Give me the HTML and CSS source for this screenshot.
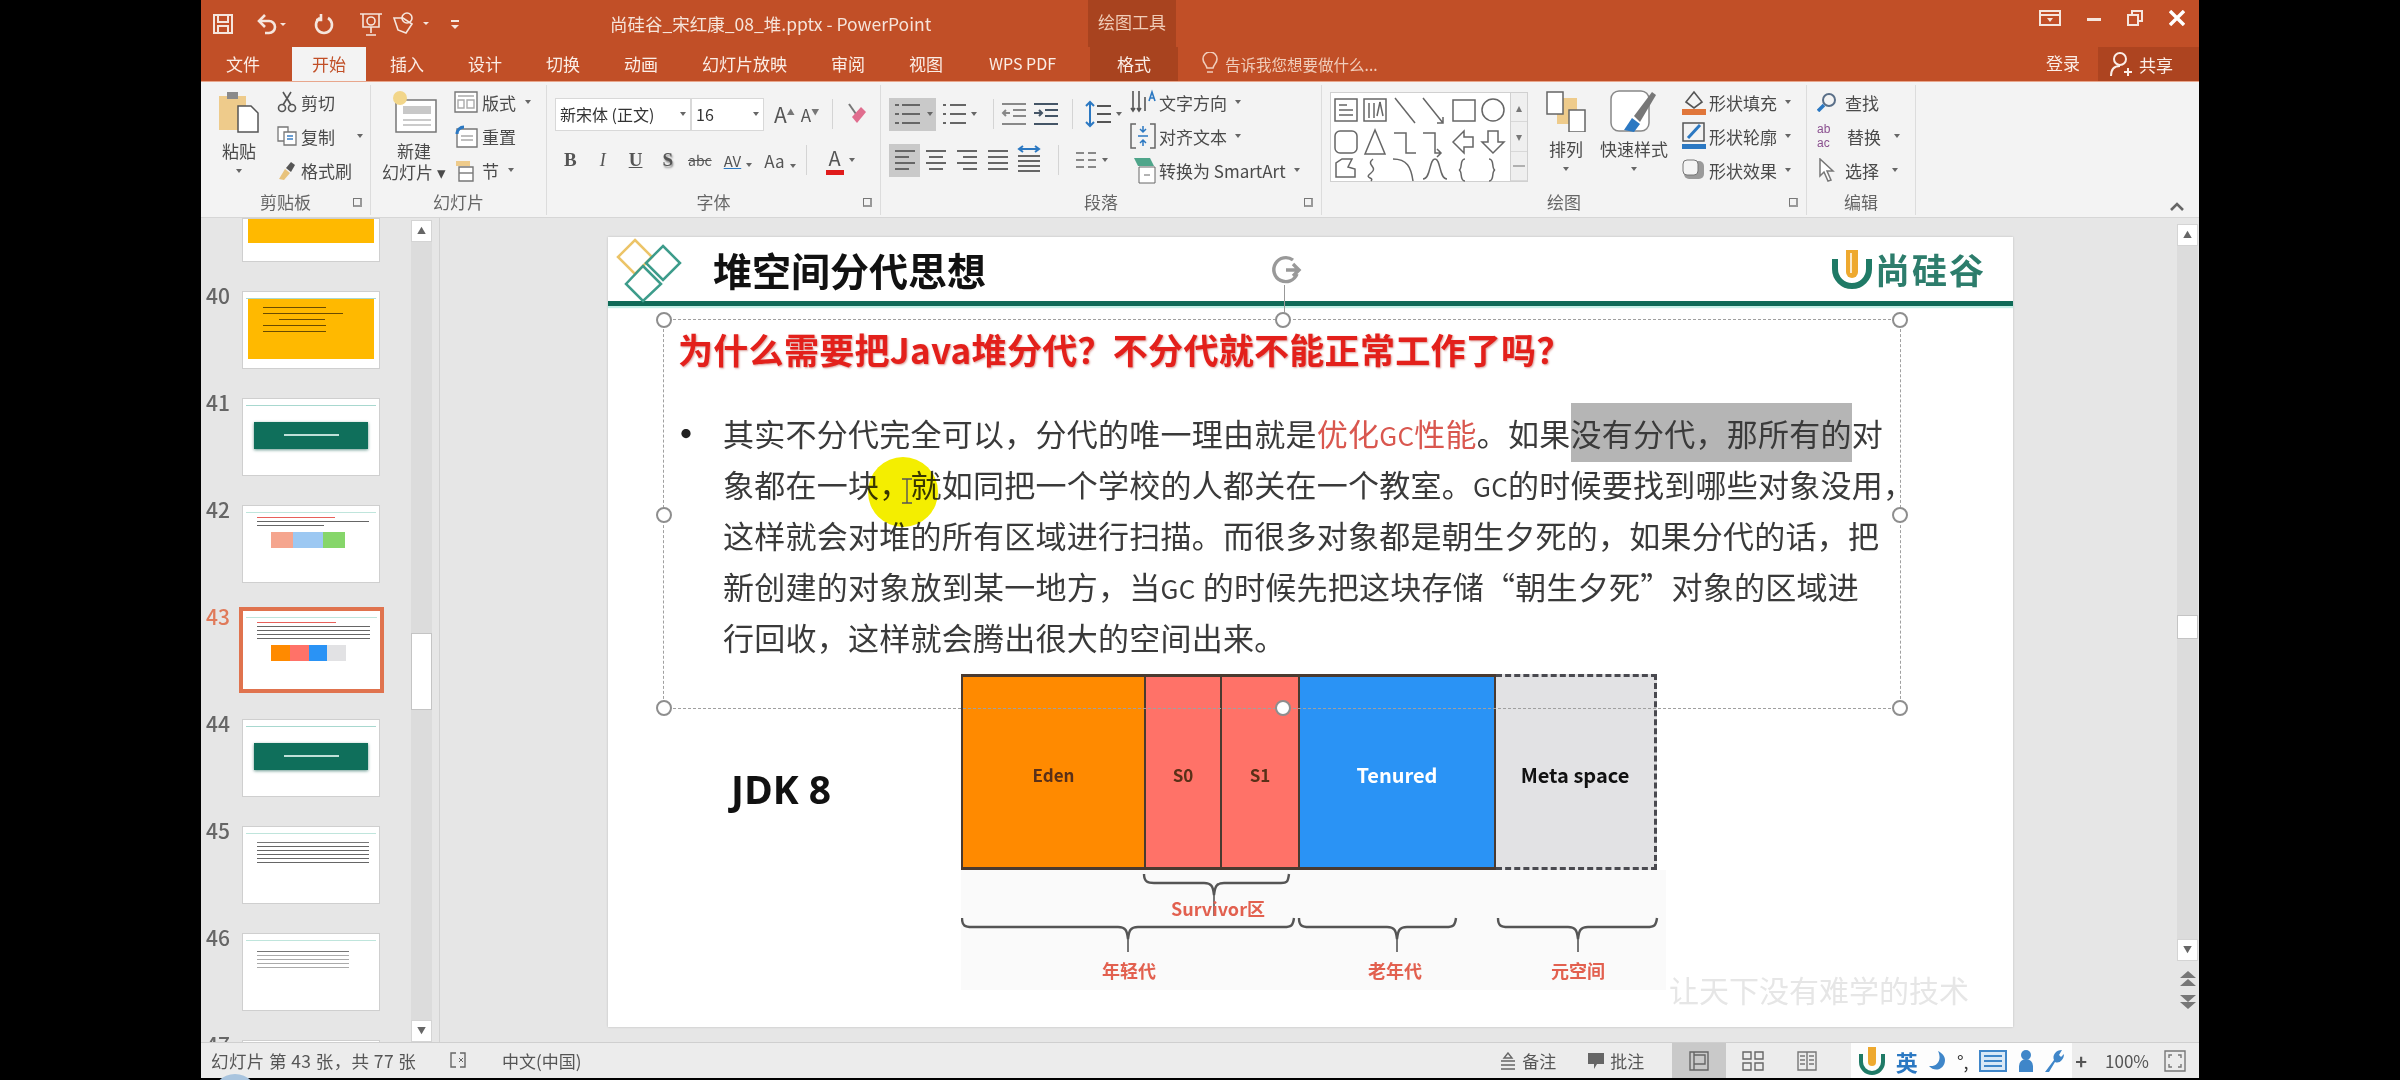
FILE: index.html
```html
<!DOCTYPE html>
<html lang="zh-CN">

<head>
    <meta charset="UTF-8">
    <title>尚硅谷_宋红康_08_堆.pptx - PowerPoint</title>
    <link rel="stylesheet" href="styles.css">
</head>

<body>
    <div class="app">
        <!-- title bar -->
        <div class="title-row">
            <div class="qat">
                <svg class="qat-save" width="22" height="22" viewBox="0 0 22 22" fill="none" stroke="#f5e6de" stroke-width="2"><path d="M2 2h18v18H2z"/><path d="M6 2v7h10V2M6 20v-7h10v7"/></svg>
                <svg class="qat-undo" width="32" height="22" viewBox="0 0 32 22" fill="none" stroke="#f5e6de" stroke-width="2.6"><path d="M4 8h9a6 6 0 0 1 0 12H9"/><path d="M9 2L3 8l6 6"/><path d="M24 10l3 3 3-3z" fill="#f5e6de" stroke="none"/></svg>
                <svg class="qat-redo" width="22" height="22" viewBox="0 0 22 22" fill="none" stroke="#f5e6de" stroke-width="2.6"><path d="M7 5a8 8 0 1 0 8 0"/><path d="M8 1v6H3"/></svg>
                <svg class="qat-show" width="24" height="26" viewBox="0 0 24 26" fill="none" stroke="#f5e6de" stroke-width="1.6"><path d="M1 3h22M4 3v13h16V3M12 16v6M7 24h10"/><circle cx="12" cy="10" r="4"/></svg>
                <svg class="qat-touch" width="38" height="24" viewBox="0 0 38 24" fill="none" stroke="#f5e6de" stroke-width="1.6"><path d="M2 6h9l9 6-6 9-8-3z"/><circle cx="15" cy="6" r="5"/><path d="M31 10l3 3 3-3z" fill="#f5e6de" stroke="none"/></svg>
                <svg class="qat-more" width="10" height="14" viewBox="0 0 10 14" fill="#f5e6de"><path d="M1 3h8v2H1zM1 8h8l-4 4z"/></svg>
            </div>
            <div class="doc-title">尚硅谷_宋红康_08_堆.pptx - PowerPoint</div>
            <div class="tool-head">绘图工具</div>
            <div class="win-controls">
                <svg width="22" height="16" viewBox="0 0 22 16" fill="none" stroke="#f5e6de" stroke-width="2"><path d="M1 1h20v14H1zM1 5h20"/><path d="M8 8h6l-3 4z" fill="#f5e6de" stroke="none"/></svg>
                <svg width="14" height="16" viewBox="0 0 14 16" fill="#f5e6de"><path d="M0 8h14v3H0z"/></svg>
                <svg width="16" height="16" viewBox="0 0 16 16" fill="none" stroke="#f5e6de" stroke-width="2"><path d="M1 5h10v10H1zM5 5V1h10v10h-4"/></svg>
                <svg width="16" height="16" viewBox="0 0 16 16" fill="none" stroke="#fff" stroke-width="3.4"><path d="M1 1l14 14M15 1L1 15"/></svg>
            </div>
        </div>
        <div class="tab-row">
            <div class="tab tab-file">文件</div>
            <div class="tab tab-active">开始</div>
            <div class="tab">插入</div>
            <div class="tab">设计</div>
            <div class="tab">切换</div>
            <div class="tab">动画</div>
            <div class="tab">幻灯片放映</div>
            <div class="tab">审阅</div>
            <div class="tab">视图</div>
            <div class="tab tab-wps">WPS PDF</div>
            <div class="tab tab-tool">格式</div>
            <div class="tell-me">
                <svg width="16" height="24" viewBox="0 0 16 24" fill="none" stroke="#f0cdbb" stroke-width="1.6"><path d="M5 16C4 12 1 11 1 7a7 7 0 0 1 14 0c0 4-3 5-4 9zM5 20h6"/></svg>
                <span>告诉我您想要做什么...</span>
            </div>
            <div class="login">登录</div>
            <div class="share">
                <svg width="24" height="26" viewBox="0 0 24 26" fill="none" stroke="#fbeee7" stroke-width="2"><circle cx="11" cy="8" r="6"/><path d="M2 25c0-6 3-10 9-10M15 21h8M19 17v8"/></svg>
                <span>共享</span>
            </div>
        </div>

        <!-- ribbon -->
        <div class="ribbon">
            <div class="group group-clip">
                <div class="group-body">
                    <div class="big-btn paste-btn">
                        <svg width="42" height="44" viewBox="0 0 42 44"><path d="M1 6h27v34H1z" fill="#eecb8b"/><path d="M9 2h11v7H9z" fill="#8a8a8a"/><path d="M20 16h13l7 7v19H20z" fill="#fff" stroke="#555" stroke-width="1.5"/></svg>
                        <span>粘贴</span><i class="caret"></i>
                    </div>
                    <div class="rows">
                        <div class="row">
                            <svg width="20" height="22" viewBox="0 0 20 22" fill="none" stroke="#555" stroke-width="1.6"><circle cx="5" cy="17" r="3.5"/><circle cx="15" cy="17" r="3.5"/><path d="M6 14L14 1M14 14L6 1"/></svg>
                            <span>剪切</span>
                        </div>
                        <div class="row">
                            <svg width="20" height="20" viewBox="0 0 20 20" fill="#fff" stroke="#777" stroke-width="1.3"><path d="M1 1h10v14H1z"/><path d="M7 6h12v13H7z"/><path d="M10 10h6M10 13h6" stroke="#3b7fc4"/></svg>
                            <span>复制</span><i class="caret caret-far"></i>
                        </div>
                        <div class="row">
                            <svg width="20" height="22" viewBox="0 0 20 22"><path d="M2 20l6-10 5 4-6 7z" fill="#e8c37c"/><path d="M9 9l5-6 4 3-4 7z" fill="#555"/></svg>
                            <span>格式刷</span>
                        </div>
                    </div>
                </div>
                <div class="group-label">剪贴板<i class="launcher"></i></div>
            </div>

            <div class="group group-slides">
                <div class="group-body">
                    <div class="big-btn new-btn">
                        <svg width="46" height="44" viewBox="0 0 46 44"><path d="M5 10h40v32H5z" fill="#fff" stroke="#777" stroke-width="1.5"/><path d="M12 16h28v8H12z" fill="#c8c8c8"/><path d="M12 30h28M12 35h28" stroke="#bbb" stroke-width="1.5"/><circle cx="9" cy="8" r="7" fill="#f2d68a"/></svg>
                        <span>新建</span><span>幻灯片 ▾</span>
                    </div>
                    <div class="rows">
                        <div class="row">
                            <svg width="24" height="22" viewBox="0 0 24 22" fill="#fff" stroke="#777" stroke-width="1.4"><path d="M1 1h22v20H1z"/><path d="M4 5h16M4 9h6v8H4zM13 9h7v8h-7z" stroke="#aaa"/></svg>
                            <span>版式</span><i class="caret"></i>
                        </div>
                        <div class="row">
                            <svg width="24" height="24" viewBox="0 0 24 24" fill="#fff" stroke="#777" stroke-width="1.4"><path d="M3 5h20v18H3z"/><path d="M10 3a7 7 0 0 0-7 7" stroke="#2b78c2" stroke-width="3" fill="none"/><path d="M7 12h12M7 16h12" stroke="#aaa"/></svg>
                            <span>重置</span>
                        </div>
                        <div class="row">
                            <svg width="24" height="24" viewBox="0 0 24 24" fill="#fff" stroke="#777" stroke-width="1.4"><path d="M5 9h14v14H5z"/><path d="M2 3h14v5H2z" fill="#eecb8b" stroke="none"/><path d="M5 15h14"/></svg>
                            <span>节</span><i class="caret"></i>
                        </div>
                    </div>
                </div>
                <div class="group-label">幻灯片</div>
            </div>

            <div class="group group-font">
                <div class="group-body group-two">
                    <div class="tool-line">
                        <div class="combo combo-font">新宋体 (正文)<i class="caret"></i></div>
                        <div class="combo combo-size">16<i class="caret"></i></div>
                        <span class="glyph glyph-grow">A<sup>▲</sup></span>
                        <span class="glyph glyph-shrink">A<sup>▼</sup></span>
                        <i class="sep sep-wide"></i>
                        <svg width="20" height="26" viewBox="0 0 20 26"><path d="M3 3l7 10" stroke="#777" stroke-width="2"/><path d="M6 16L15 6l5 5-9 11z" fill="#e06d8e"/></svg>
                    </div>
                    <div class="tool-line font-marks">
                        <b>B</b>
                        <i class="mark-i">I</i>
                        <b class="mark-u">U</b>
                        <b class="mark-s">S</b>
                        <span class="mark-abc">abc</span>
                        <span class="mark-av">AV<i class="caret"></i></span>
                        <span class="mark-aa">Aa<i class="caret"></i></span>
                        <i class="sep"></i>
                        <span class="mark-color">A</span><i class="caret"></i>
                    </div>
                </div>
                <div class="group-label">字体<i class="launcher"></i></div>
            </div>

            <div class="group group-para">
                <div class="group-body">
                    <div class="group-two para-left">
                        <div class="tool-line">
                            <div class="list-btn list-on">
                                <svg width="28" height="26" viewBox="0 0 28 26" stroke="#666" stroke-width="2"><path d="M8 4h18M8 13h18M8 22h18M1 4h4M1 13h4M1 22h4"/></svg><i class="caret"></i>
                            </div>
                            <div class="list-btn">
                                <svg width="24" height="26" viewBox="0 0 24 26" stroke="#666" stroke-width="2"><path d="M8 4h16M8 13h16M8 22h16M1 4h3M1 13h3M1 22h3"/></svg><i class="caret"></i>
                            </div>
                            <i class="sep sep-thin"></i>
                            <svg class="indent" width="26" height="24" viewBox="0 0 26 24" stroke="#888" stroke-width="2" fill="none"><path d="M1 2h24M12 8h13M12 14h13M1 22h24M9 11H2M5 8l-3 3 3 3"/></svg>
                            <svg width="26" height="24" viewBox="0 0 26 24" stroke="#456" stroke-width="2" fill="none"><path d="M1 2h24M12 8h13M12 14h13M1 22h24M1 11h8M6 8l3 3-3 3" /></svg>
                            <i class="sep sep-wide"></i>
                            <svg width="26" height="28" viewBox="0 0 26 28" stroke="#555" stroke-width="2" fill="none"><path d="M12 6h14M12 14h14M12 22h14"/><path d="M5 2v24M1 6l4-4 4 4M1 22l4 4 4-4" stroke="#2b78c2"/></svg><i class="caret"></i>
                        </div>
                        <div class="tool-line">
                            <div class="align-btn align-on"><svg width="24" height="22" viewBox="0 0 24 22" stroke="#666" stroke-width="2"><path d="M2 2h20M2 8h14M2 14h20M2 20h14"/></svg></div>
                            <div class="align-btn"><svg width="24" height="22" viewBox="0 0 24 22" stroke="#666" stroke-width="2"><path d="M2 2h20M5 8h14M2 14h20M5 20h14"/></svg></div>
                            <div class="align-btn"><svg width="24" height="22" viewBox="0 0 24 22" stroke="#666" stroke-width="2"><path d="M2 2h20M8 8h14M2 14h20M8 20h14"/></svg></div>
                            <div class="align-btn"><svg width="24" height="22" viewBox="0 0 24 22" stroke="#666" stroke-width="2"><path d="M2 2h20M2 8h20M2 14h20M2 20h20"/></svg></div>
                            <div class="align-btn"><svg width="26" height="32" viewBox="0 0 26 32" stroke="#666" stroke-width="2" fill="none"><path d="M2 12h22M2 17h22M2 22h22M2 27h22"/><path d="M3 5h20M7 2L3 5l4 3M19 2l4 3-4 3" stroke="#2b78c2"/></svg></div>
                            <i class="sep sep-cols"></i>
                            <svg width="22" height="20" viewBox="0 0 22 20" stroke="#888" stroke-width="2"><path d="M1 3h8M13 3h8M1 10h8M13 10h8M1 17h8M13 17h8"/></svg><i class="caret"></i>
                        </div>
                    </div>
                    <div class="rows para-right">
                        <div class="row">
                            <svg width="26" height="26" viewBox="0 0 26 26" stroke="#555" stroke-width="1.6" fill="none"><path d="M3 2v20M9 2v20M15 8v14M1 19l2 3 2-3M7 19l2 3 2-3"/><path d="M19 12l3-9 3 9M20 9h4" stroke="#2b78c2"/></svg>
                            <span>文字方向</span><i class="caret"></i>
                        </div>
                        <div class="row">
                            <svg width="26" height="26" viewBox="0 0 26 26" stroke="#666" stroke-width="1.5" fill="none"><path d="M6 1H1v24h5M20 1h5v24h-5"/><path d="M8 13h10M13 3v6M13 23v-6M10 6l3 3 3-3M10 20l3-3 3 3" stroke="#2b78c2"/></svg>
                            <span>对齐文本</span><i class="caret"></i>
                        </div>
                        <div class="row">
                            <svg width="26" height="28" viewBox="0 0 26 28"><path d="M4 2h16l4 8H8z" fill="#4fa58a"/><path d="M9 11h16v16H9z" fill="#fff" stroke="#666"/><path d="M14 19h6" stroke="#666"/></svg>
                            <span>转换为 SmartArt</span><i class="caret"></i>
                        </div>
                    </div>
                </div>
                <div class="group-label">段落<i class="launcher"></i></div>
            </div>

            <div class="group group-draw">
                <div class="group-body">
                    <div class="gallery">
                        <svg width="179" height="89" viewBox="0 0 179 89" fill="none" stroke="#666" stroke-width="1.5">
                            <path d="M4 6h22v22H4zM8 12h8M8 17h14M8 22h14"/>
                            <path d="M33 6h22v22H33zM38 10v15M43 10v15M49 9l-3 14M49 9l3 14"/>
                            <path d="M64 5l20 25"/>
                            <path d="M92 5l20 25M106 30h6v-6"/>
                            <path d="M122 7h22v21h-22z"/>
                            <circle cx="162" cy="17" r="11"/>
                            <rect x="4" y="38" width="22" height="22" rx="5"/>
                            <path d="M44 37l-10 24h20z"/>
                            <path d="M63 40h12v20h10"/>
                            <path d="M92 40h12v20h6M106 56l4 4-4 4"/>
                            <path d="M122 49l11-11v6h9v10h-9v6z"/>
                            <path d="M162 60l-11-11h6V38h10v11h6z"/>
                            <path d="M5 84V70l6-4h10l-4 8 7 2v8z"/>
                            <path d="M42 66c-8 6 6 8-2 14s4 4 0 8"/>
                            <path d="M62 66c14 0 18 8 20 22"/>
                            <path d="M92 86c8 0 6-20 12-20s4 20 12 20"/>
                            <path d="M134 66c-6 0-2 10-6 11 4 1 0 11 6 11"/>
                            <path d="M158 66c6 0 2 10 6 11-4 1 0 11-6 11"/>
                        </svg>
                        <div class="gallery-scroll">
                            <span>▴</span><span>▾</span><span>═</span>
                        </div>
                    </div>
                    <div class="big-btn arrange-btn">
                        <svg width="42" height="42" viewBox="0 0 42 42"><path d="M12 8h20v26H12z" fill="#eecb8b"/><path d="M2 2h16v22H2z" fill="#fff" stroke="#666" stroke-width="1.5"/><path d="M24 20h16v22H24z" fill="#fff" stroke="#666" stroke-width="1.5"/></svg>
                        <span>排列</span><i class="caret"></i>
                    </div>
                    <div class="big-btn style-btn">
                        <svg width="48" height="42" viewBox="0 0 48 42"><rect x="1" y="1" width="38" height="40" rx="8" fill="#fff" stroke="#888" stroke-width="1.5"/><path d="M14 40l8-12 8 6-6 8z" fill="#2b78c2"/><path d="M24 26l18-24 4 3-16 27z" fill="#777"/></svg>
                        <span>快速样式</span><i class="caret"></i>
                    </div>
                    <div class="rows shape-rows">
                        <div class="row">
                            <svg width="24" height="28" viewBox="0 0 24 28"><path d="M4 14l8-10 8 10-8 6z" fill="none" stroke="#555" stroke-width="1.6"/><path d="M0 21h24v6H0z" fill="#e0763a"/></svg>
                            <span>形状填充</span><i class="caret"></i>
                        </div>
                        <div class="row">
                            <svg width="24" height="28" viewBox="0 0 24 28" fill="none"><path d="M1 1h21v18H1z" stroke="#555" stroke-width="1.5"/><path d="M6 16L18 3" stroke="#2b78c2" stroke-width="3"/><path d="M0 22h24v5H0z" fill="#2b78c2"/></svg>
                            <span>形状轮廓</span><i class="caret"></i>
                        </div>
                        <div class="row">
                            <svg width="24" height="24" viewBox="0 0 24 24"><rect x="2" y="3" width="20" height="18" rx="5" fill="#9a9a9a"/><rect x="1" y="2" width="15" height="15" rx="4" fill="#f4f4f4" stroke="#777"/></svg>
                            <span>形状效果</span><i class="caret"></i>
                        </div>
                    </div>
                </div>
                <div class="group-label">绘图<i class="launcher"></i></div>
            </div>

            <div class="group group-edit">
                <div class="group-body">
                    <div class="rows">
                        <div class="row">
                            <svg width="20" height="20" viewBox="0 0 20 20" fill="none"><circle cx="12" cy="8" r="6" stroke="#5a6f88" stroke-width="2"/><path d="M7 13l-6 6" stroke="#2b78c2" stroke-width="3.5"/></svg>
                            <span>查找</span>
                        </div>
                        <div class="row">
                            <div class="ab-icon"><span>ab</span><span>ac</span></div>
                            <span>替换</span><i class="caret"></i>
                        </div>
                        <div class="row">
                            <svg width="20" height="24" viewBox="0 0 20 24" fill="#fff" stroke="#777" stroke-width="1.5"><path d="M3 1v17l4-4 4 9 3-1-4-9h6z"/></svg>
                            <span>选择</span><i class="caret"></i>
                        </div>
                    </div>
                </div>
                <div class="group-label">编辑</div>
            </div>

            <div class="ribbon-end">
                <svg width="16" height="10" viewBox="0 0 16 10" fill="none" stroke="#666" stroke-width="2.6"><path d="M2 9l6-6 6 6"/></svg>
            </div>
        </div>

        <!-- work area -->
        <div class="work">
            <div class="thumbs">
                <div class="thumb-list">
                    <div class="thumb-item thumb-cut"><div class="thumb"><div class="t-yellow"></div></div></div>
                    <div class="thumb-item"><span class="num">40</span><div class="thumb"><div class="t-head"></div><div class="t-yellow t-code"><i></i><i></i><i></i><i></i><i></i></div></div></div>
                    <div class="thumb-item"><span class="num">41</span><div class="thumb"><div class="t-head"></div><div class="t-banner"><i></i></div></div></div>
                    <div class="thumb-item"><span class="num">42</span><div class="thumb"><div class="t-head t-dark"></div><div class="t-lines t-short"><i></i><i></i><i></i></div><div class="t-bar t-pale"><i></i><i></i><i></i></div></div></div>
                    <div class="thumb-item item-on"><span class="num">43</span><div class="thumb"><div class="t-head t-dark"></div><div class="t-lines"><i></i><i></i><i></i><i></i><i></i></div><div class="t-bar"><i></i><i></i><i></i><i></i></div></div></div>
                    <div class="thumb-item"><span class="num">44</span><div class="thumb"><div class="t-head"></div><div class="t-banner"><i></i></div></div></div>
                    <div class="thumb-item"><span class="num">45</span><div class="thumb"><div class="t-head t-dark"></div><div class="t-lines t-plain"><i></i><i></i><i></i><i></i><i></i><i></i></div></div></div>
                    <div class="thumb-item"><span class="num">46</span><div class="thumb"><div class="t-head t-dark"></div><div class="t-lines t-list"><i></i><i></i><i></i><i></i><i></i></div></div></div>
                    <div class="thumb-item"><span class="num">47</span><div class="thumb"><div class="t-head t-dark"></div></div></div>
                </div>
                <div class="scroll">
                    <div class="scroll-btn">▲</div>
                    <div class="scroll-track"><div class="scroll-thumb thumb-left"></div></div>
                    <div class="scroll-btn">▼</div>
                </div>
            </div>

            <div class="canvas">
                <div class="slide">
                    <div class="slide-head">
                        <svg class="diamonds" width="70" height="64" viewBox="0 0 70 64" fill="none" stroke-width="2.5">
                            <path d="M27 3l17 17-17 17-17-17z" stroke="#ecc468"/>
                            <path d="M55 9l17 17-17 17-17-17z" stroke="#3d9c8b"/>
                            <path d="M35 29l18 18-18 17-17-17z" stroke="#3d9c8b"/>
                        </svg>
                        <h1 class="slide-title">堆空间分代思想</h1>
                        <div class="brand">
                            <svg width="40" height="44" viewBox="0 0 40 44"><path d="M3 12v10a17 17 0 0 0 34 0V12" fill="none" stroke="#1f7a66" stroke-width="6"/><path d="M14 3h12v22a6 6 0 0 1-12 0z" fill="#eea92f"/><path d="M19 6v20" stroke="#fff" stroke-width="1.5"/></svg>
                            <span>尚硅谷</span>
                        </div>
                    </div>
                    <div class="rule"></div>
                    <div class="text-box">
                        <h2 class="ask">为什么需要把Java堆分代？不分代就不能正常工作了吗？</h2>
                        <div class="bullet-block">
                            <span class="bullet">•</span>
                            <div class="lines">
                                <div>其实不分代完全可以，分代的唯一理由就是<span class="hot">优化<span class="gc">GC</span>性能</span>。如果<span class="marked">没有分代，那所有的</span>对</div>
                                <div>象都在一块，就如同把一个学校的人都关在一个教室。<span class="gc">GC</span>的时候要找到哪些对象没用，</div>
                                <div>这样就会对堆的所有区域进行扫描。而很多对象都是朝生夕死的，如果分代的话，把</div>
                                <div>新创建的对象放到某一地方，当<span class="gc">GC</span>&nbsp;的时候先把这块存储“朝生夕死”对象的区域进</div>
                                <div>行回收，这样就会腾出很大的空间出来。</div>
                            </div>
                        </div>
                    </div>
                    <div class="chart-row">
                        <div class="jdk">JDK 8</div>
                        <div class="chart-col">
                            <div class="chart">
                                <div class="seg seg-eden">Eden</div>
                                <div class="seg seg-s0">S0</div>
                                <div class="seg seg-s1">S1</div>
                                <div class="seg seg-ten">Tenured</div>
                                <div class="seg seg-meta">Meta space</div>
                            </div>
                            <svg class="braces" width="705" height="120" viewBox="0 0 705 120" fill="none" stroke="#555" stroke-width="2.4">
                                <path d="M183 4c0 8 4 9 10 9h50c8 0 9 4 10 12 1-8 2-12 10-12h57c6 0 7-1 8-9"/>
                                <path d="M253 24v22" stroke-width="1.6"/>
                                <path d="M1 48c0 8 3 9 10 9h146c8 0 9 4 10 12 1-8 2-12 10-12h146c7 0 9-1 10-9"/>
                                <path d="M167 66v16" stroke-width="1.6"/>
                                <path d="M338 48c0 8 3 9 10 9h78c8 0 9 4 10 12 1-8 2-12 10-12h39c7 0 9-1 10-9"/>
                                <path d="M436 66v16" stroke-width="1.6"/>
                                <path d="M537 48c0 8 3 9 10 9h60c8 0 9 4 10 12 1-8 2-12 10-12h59c7 0 9-1 10-9"/>
                                <path d="M617 66v16" stroke-width="1.6"/>
                                <text class="note" x="257" y="46" text-anchor="middle">Survivor区</text>
                                <text class="note" x="168" y="108" text-anchor="middle">年轻代</text>
                                <text class="note" x="434" y="108" text-anchor="middle">老年代</text>
                                <text class="note" x="617" y="108" text-anchor="middle">元空间</text>
                            </svg>
                        </div>
                    </div>

                    <!-- things lying over the slide -->
                    <div class="watermark">让天下没有难学的技术</div>
                    <div class="cursor-dot"></div>
                    <svg class="text-cursor" width="12" height="26" viewBox="0 0 12 26" fill="none" stroke="#555" stroke-width="1.4"><path d="M1 1h10M6 1v24M1 25h10"/></svg>
                    <div class="frame">
                        <i class="handle h-tl"></i><i class="handle h-tm"></i><i class="handle h-tr"></i>
                        <i class="handle h-ml"></i><i class="handle h-mr"></i>
                        <i class="handle h-bl"></i><i class="handle h-bm"></i><i class="handle h-br"></i>
                        <div class="rotate">
                            <svg width="34" height="34" viewBox="0 0 34 34" fill="none" stroke="#999" stroke-width="3.4"><path d="M24 7a12 12 0 1 0 4 14"/><path d="M17 17l12 0M24 11l6 6-6 6"/></svg>
                        </div>
                    </div>
                </div>
                <div class="scroll scroll-main">
                    <div class="scroll-btn">▲</div>
                    <div class="scroll-track"><div class="scroll-thumb thumb-right"></div></div>
                    <div class="scroll-btn">▼</div>
                    <div class="page-jump">
                        <svg width="20" height="16" viewBox="0 0 20 16" fill="#777"><path d="M10 0l8 7H2zM10 8l8 7H2z"/></svg>
                        <svg width="20" height="16" viewBox="0 0 20 16" fill="#777"><path d="M2 1h16l-8 7zM2 8h16l-8 7z"/></svg>
                    </div>
                </div>
            </div>
        </div>

        <!-- status bar -->
        <div class="status">
            <span class="st-count">幻灯片 第 43 张，共 77 张</span>
            <svg class="st-check" width="16" height="20" viewBox="0 0 16 20" fill="none" stroke="#666" stroke-width="1.4"><path d="M6 2H1v14h5M10 2h5v14h-5"/><path d="M9 7l4 4M13 7l-4 4" stroke-width="1"/></svg>
            <span class="st-lang">中文(中国)</span>
            <div class="st-right">
                <svg width="16" height="18" viewBox="0 0 16 18" fill="none" stroke="#666" stroke-width="1.4"><path d="M1 9h14M1 13h14M1 17h14M8 1l-4 5h8z"/></svg>
                <span class="st-note">备注</span>
                <svg width="16" height="18" viewBox="0 0 16 18" fill="#666"><path d="M0 1h16v11H9l-3 5v-5H0z"/></svg>
                <span class="st-comment">批注</span>
                <div class="view-btn view-on"><svg width="20" height="20" viewBox="0 0 20 20" fill="none" stroke="#666" stroke-width="1.4"><path d="M1 1h18v18H1zM5 1v18M5 4h11v9H5z"/></svg></div>
                <div class="view-btn"><svg width="22" height="20" viewBox="0 0 22 20" fill="none" stroke="#666" stroke-width="1.4"><path d="M1 1h8v7H1zM13 1h8v7h-8zM1 12h8v7H1zM13 12h8v7h-8z"/></svg></div>
                <div class="view-btn"><svg width="20" height="20" viewBox="0 0 20 20" fill="none" stroke="#777" stroke-width="1.4"><path d="M1 1h18v18H1zM10 1v18M3 5h5M3 9h5M3 13h5M12 5h5M12 9h5M12 13h5"/></svg></div>
                <div class="ime">
                    <svg width="26" height="30" viewBox="0 0 26 30"><path d="M2 8v8a11 11 0 0 0 22 0V8" fill="none" stroke="#1f7a66" stroke-width="4"/><path d="M9 1h8v15a4 4 0 0 1-8 0z" fill="#eea92f"/></svg>
                    <span class="ime-en">英</span>
                    <svg width="18" height="22" viewBox="0 0 18 22" fill="#3f86c9"><path d="M10 1c4 8 0 16-9 15 6 7 16 3 16-6 0-4-3-7-7-9z"/></svg>
                    <span class="ime-dot">°,</span>
                    <svg width="28" height="22" viewBox="0 0 28 22" fill="#d9e8f6" stroke="#3f86c9" stroke-width="2"><path d="M1 1h26v20H1zM5 6h18M5 11h18M5 16h18"/></svg>
                    <svg width="16" height="24" viewBox="0 0 16 24" fill="#3f86c9"><circle cx="8" cy="6" r="5"/><path d="M1 23v-6a7 7 0 0 1 14 0v6z"/></svg>
                    <svg width="20" height="24" viewBox="0 0 20 24" fill="#3f86c9"><path d="M1 23l9-12c-2-5 2-10 8-10l-3 5 2 2 3-3c0 6-5 10-9 8l-6 10z"/></svg>
                </div>
                <span class="zoom-plus">+</span>
                <span class="zoom-val">100%</span>
                <svg width="22" height="22" viewBox="0 0 22 22" fill="none" stroke="#777" stroke-width="1.4"><path d="M1 1h20v20H1zM5 8V5h3M17 8V5h-3M5 14v3h3M17 14v3h-3"/></svg>
            </div>
        </div>
        <div class="dock-dot"></div>
    </div>
</body>

</html>
```

FILE: styles.css
```css
* {
    box-sizing: border-box;
}

html,
body {
    margin: 0;
    height: 100%;
    overflow: hidden;
    background-color: #000;
}

body {
    font-family: "Noto Sans CJK SC", "Noto Sans", sans-serif;
    color: #444;
}

svg {
    flex: none;
    display: block;
}

.app {
    position: relative;
    width: 1998px;
    height: 1078px;
    margin-left: 201px;
    display: flex;
    flex-direction: column;
    background-color: #e6e6e6;
    filter: blur(0.6px);
}

/* title bar */
.title-row {
    height: 47px;
    flex: none;
    display: flex;
    background-color: #c14f27;
    color: #f6e4da;
}

.qat {
    width: 262px;
    flex: none;
    display: flex;
    align-items: center;
    padding-left: 11px;
}

.qat-undo {
    margin-left: 22px;
}

.qat-redo {
    margin-left: 25px;
}

.qat-show {
    margin-left: 24px;
}

.qat-touch {
    margin-left: 9px;
}

.qat-more {
    margin-left: 20px;
}

.doc-title {
    width: 625px;
    flex: none;
    padding-left: 147px;
    font-size: 17.5px;
    line-height: 48px;
    white-space: nowrap;
}

.tool-head {
    width: 88px;
    background-color: #a8431f;
    color: #f0cdb8;
    font-size: 17px;
    text-align: center;
    line-height: 44px;
}

.win-controls {
    margin-left: auto;
    width: 160px;
    height: 36px;
    padding-right: 14px;
    display: flex;
    align-items: center;
    justify-content: space-between;
}

.tab-row {
    height: 35px;
    flex: none;
    padding-left: 5px;
    display: flex;
    gap: 4px;
    background-color: #c14f27;
    border-bottom: 1px solid #e8a68c;
    font-size: 17px;
    color: #fbeee7;
}

.tab {
    padding: 0 20px;
    line-height: 33px;
    white-space: nowrap;
}

.tab-file {
    margin-right: 8px;
}

.tab-active {
    background-color: #f3f3f3;
    color: #c14f27;
}

.tab-wps {
    padding: 0 16px;
    margin-left: 6px;
    font-size: 16px;
}

.tab-tool {
    width: 88px;
    padding: 0;
    margin-left: 14px;
    text-align: center;
    background-color: #a8431f;
}

.tell-me {
    margin-left: 20px;
    display: flex;
    align-items: center;
    gap: 7px;
    color: #f0cdbb;
    font-size: 15.5px;
}

.login {
    margin-left: auto;
    line-height: 31px;
}

.share {
    width: 101px;
    margin-left: 14px;
    display: flex;
    align-items: center;
    gap: 6px;
    padding-left: 11px;
    background-color: #ad4420;
}

/* ribbon */
.ribbon {
    height: 136px;
    flex: none;
    display: flex;
    background-color: #f3f3f3;
    border-bottom: 1px solid #d6d6d6;
    font-size: 17px;
    color: #4a4a4a;
}

.group {
    display: flex;
    flex-direction: column;
    height: 130px;
    margin-top: 3px;
    border-right: 1px solid #dcdcdc;
}

.group-clip {
    width: 170px;
}

.group-slides {
    width: 176px;
}

.group-font {
    width: 334px;
}

.group-para {
    width: 441px;
}

.group-draw {
    width: 485px;
}

.group-edit {
    width: 109px;
}

.group-body {
    height: 106px;
    display: flex;
    flex: none;
}

.group-label {
    position: relative;
    flex: 1;
    text-align: center;
    font-size: 17px;
    line-height: 22px;
    color: #666;
}

.launcher {
    position: absolute;
    right: 8px;
    top: 7px;
    width: 9px;
    height: 9px;
    border-left: 1px solid #777;
    border-top: 1px solid #777;
    border-right: 2px solid #999;
    border-bottom: 2px solid #999;
}

.rows {
    display: flex;
    flex-direction: column;
}

.row {
    height: 34px;
    display: flex;
    align-items: center;
    gap: 4px;
    white-space: nowrap;
}

.caret {
    display: inline-block;
    width: 0;
    height: 0;
    margin-left: 5px;
    border-left: 3px solid transparent;
    border-right: 3px solid transparent;
    border-top: 4px solid #666;
}

.caret-far {
    margin-left: 18px;
}

.big-btn {
    display: flex;
    flex-direction: column;
    align-items: center;
    white-space: nowrap;
    line-height: 21px;
    padding-top: 5px;
}

.big-btn svg {
    margin-bottom: 6px;
}

.big-btn .caret {
    margin: 8px 0 0;
}

.paste-btn {
    width: 46px;
    margin-left: 15px;
}

.group-clip .rows {
    margin-left: 15px;
}

.new-btn {
    width: 80px;
    margin-left: 3px;
}

.group-slides .rows {
    margin-left: 0;
}

.group-two {
    display: flex;
    flex-direction: column;
    gap: 12px;
    padding: 12px 0 0 8px;
}

.para-left {
    width: 241px;
}

.tool-line {
    height: 34px;
    display: flex;
    align-items: center;
    white-space: nowrap;
}

.sep {
    width: 1px;
    height: 30px;
    margin: 0 10px;
    background-color: #d4d4d4;
}

.sep-wide {
    margin: 0 13px;
}

.sep-thin {
    margin: 0 7px;
}

.sep-cols {
    margin: 0 16px 0 14px;
}

.combo {
    height: 33px;
    padding: 0 4px;
    display: flex;
    align-items: center;
    justify-content: space-between;
    background-color: #fff;
    border: 1px solid #d8d8d8;
    font-size: 16px;
    color: #333;
}

.combo-font {
    width: 136px;
}

.combo-size {
    width: 73px;
    margin-right: 10px;
}

.glyph {
    font-size: 21px;
    margin-right: 6px;
    color: #555;
}

.glyph sup {
    font-size: 8px;
    color: #777;
}

.glyph-shrink {
    font-size: 17px;
    margin-right: 0;
}

.font-marks {
    padding-left: 9px;
    font-size: 19px;
    color: #555;
}

.font-marks b,
.font-marks i.mark-i {
    font-family: "Liberation Serif", serif;
}

.mark-i {
    margin-left: 23px;
    font-size: 18px;
}

.mark-u {
    margin-left: 23px;
    text-decoration: underline;
}

.mark-s {
    margin-left: 20px;
    text-shadow: 1px 2px 2px #888;
}

.mark-abc {
    margin-left: 15px;
    font-size: 14px;
    text-decoration: line-through;
}

.mark-av {
    margin-left: 12px;
    font-size: 15px;
    text-decoration: underline;
    text-decoration-color: #2b78c2;
}

.mark-aa {
    margin-left: 12px;
    font-size: 17px;
}

.mark-color {
    padding: 0 3px;
    margin-left: 9px;
    font-size: 20px;
    line-height: 24px;
    border-bottom: 5px solid #e01b1b;
}

.list-btn {
    height: 33px;
    display: flex;
    align-items: center;
    padding-right: 3px;
    margin-right: 6px;
}

.list-on {
    width: 49px;
    padding-left: 5px;
    background-color: #c9c9c9;
}

.indent {
    margin-right: 6px;
}

.align-btn {
    width: 31px;
    height: 33px;
    display: flex;
    align-items: center;
    justify-content: center;
    flex: none;
}

.align-on {
    background-color: #c9c9c9;
}

.para-right {
    margin-left: 8px;
}

.para-right .row {
    gap: 3px;
}

.gallery {
    width: 198px;
    height: 90px;
    margin: 7px 0 0 8px;
    display: flex;
    background-color: #fff;
    border: 1px solid #d0d0d0;
    flex: none;
}

.gallery-scroll {
    flex: 1;
    display: flex;
    flex-direction: column;
    border-left: 1px solid #d0d0d0;
    background-color: #efefef;
    font-size: 12px;
    color: #777;
    text-align: center;
}

.gallery-scroll span {
    flex: 1;
    line-height: 28px;
    border-bottom: 1px solid #d8d8d8;
}

.arrange-btn {
    width: 44px;
    margin-left: 16px;
}

.style-btn {
    width: 72px;
    margin-left: 10px;
}

.shape-rows {
    margin-left: 12px;
}

.shape-rows .row {
    gap: 3px;
}

.group-edit .rows {
    margin-left: 10px;
}

.group-edit .row {
    gap: 8px;
}

.ab-icon {
    width: 22px;
    flex: none;
    display: flex;
    flex-direction: column;
    font-family: "Liberation Sans", sans-serif;
    font-size: 12px;
    line-height: 14px;
    color: #8a4f8f;
}

.ribbon-end {
    flex: 1;
    display: flex;
    justify-content: flex-end;
    align-items: flex-end;
    padding: 0 14px 6px 0;
}

/* work area */
.work {
    flex: 1;
    min-height: 0;
    display: flex;
    border-bottom: 1px solid #cfcfcf;
}

.thumbs {
    width: 239px;
    flex: none;
    display: flex;
    border-right: 1px solid #d2d2d2;
    padding-right: 6px;
    overflow: hidden;
}

.thumb-list {
    width: 210px;
    flex: none;
    height: 825px;
    overflow: hidden;
    padding-left: 5px;
}

.thumb-item {
    height: 78px;
    margin-bottom: 29px;
    display: flex;
}

.thumb-cut {
    height: 44px;
    margin-bottom: 29px;
    padding-left: 36px;
}

.thumb-cut .thumb {
    height: 44px;
}

.thumb-cut .t-yellow {
    height: 24px;
    margin: 0 5px;
}

.num {
    width: 36px;
    font-size: 21px;
    font-weight: 500;
    line-height: 18px;
    color: #666;
    margin-top: -5px;
}

.thumb {
    width: 138px;
    height: 78px;
    background-color: #fff;
    border: 1px solid #cfcfcf;
    overflow: hidden;
}

.item-on .num {
    color: #e07a5a;
}

.item-on .thumb {
    width: 145px;
    height: 86px;
    margin: -5px 0 0 -3px;
    border: 4px solid #e0734e;
}

.t-head {
    height: 6px;
    margin: 1px 3px 0;
    border-bottom: 1px solid #a8d8cf;
}

.t-yellow {
    height: 60px;
    margin: 0 5px;
    padding: 3px 6px;
    background-color: #ffb900;
}

.t-yellow i {
    display: block;
    height: 1px;
    width: 55%;
    margin: 5px 0 0 8%;
    background-color: #6a4b00;
}

.t-yellow i:nth-child(2) {
    width: 70%;
}

.t-yellow i:nth-child(3) {
    width: 40%;
    margin-left: 22%;
}

.t-banner {
    height: 27px;
    margin: 16px 11px 0;
    background-color: #0f6f5b;
    box-shadow: 0 1px 3px #6a9a90;
    padding-top: 12px;
}

.t-banner i {
    display: block;
    width: 55px;
    height: 2px;
    margin: 0 auto;
    background-color: #bfe0d8;
}

.t-dark {
    border-bottom-color: #bfe5dc;
}

.t-lines {
    padding: 4px 10px 0 14px;
}

.t-lines i {
    display: block;
    height: 1px;
    margin-bottom: 3px;
    background-color: #666;
}

.t-lines i:first-child {
    background-color: #e8605a;
    width: 70%;
}

.t-short i:nth-child(3) {
    width: 60%;
}

.t-plain {
    padding-top: 8px;
}

.t-plain i:first-child,
.t-list i:first-child {
    background-color: #777;
    width: 100%;
}

.t-list {
    padding: 10px 30px 0 14px;
}

.t-list i {
    background-color: #aaa;
}

.t-bar {
    display: flex;
    height: 16px;
    margin: 6px 34px 0 28px;
}

.t-bar i {
    flex: 1;
}

.t-bar i:nth-child(1) {
    background-color: #ff8a00;
}

.t-bar i:nth-child(2) {
    background-color: #ff7268;
}

.t-bar i:nth-child(3) {
    background-color: #2a93f5;
}

.t-bar i:nth-child(4) {
    background-color: #e2e2e4;
}

.t-pale i:nth-child(1) {
    background-color: #f5a58e;
}

.t-pale i:nth-child(2) {
    flex: 1.4;
    background-color: #9cc8f2;
}

.t-pale i:nth-child(3) {
    background-color: #86d66a;
}

.scroll {
    width: 21px;
    height: 822px;
    margin-top: 2px;
    display: flex;
    flex-direction: column;
}

.scroll-btn {
    height: 22px;
    flex: none;
    background-color: #fff;
    border: 1px solid #d4d4d4;
    font-size: 9px;
    line-height: 20px;
    text-align: center;
    color: #666;
}

.scroll-track {
    position: relative;
    flex: 1;
    background-color: #dcdcdc;
}

.scroll-thumb {
    position: absolute;
    left: 0;
    width: 21px;
    background-color: #fff;
    border: 1px solid #c4c4c4;
}

.thumb-left {
    top: 391px;
    height: 77px;
}

.thumb-right {
    top: 369px;
    height: 24px;
}

.canvas {
    flex: 1;
    display: flex;
    padding: 19px 1px 0 168px;
}

.scroll-main {
    margin: -13px 0 0 auto;
}

.scroll-main .scroll-track {
    flex: none;
    height: 693px;
}

.page-jump {
    display: flex;
    flex-direction: column;
    align-items: center;
    gap: 7px;
    padding-top: 10px;
}

/* slide */
.slide {
    position: relative;
    width: 1405px;
    height: 790px;
    flex: none;
    background-color: #fff;
    box-shadow: 0 0 2px #bbb;
}

.slide-head {
    height: 64px;
    display: flex;
    align-items: center;
    padding: 0 27px 0 0;
}

.diamonds {
    overflow: visible;
}

.slide-title {
    margin: 0 0 0 35px;
    font-size: 39px;
    font-weight: 700;
    line-height: 64px;
    color: #111;
}

.brand {
    margin-left: auto;
    display: flex;
    align-items: center;
    gap: 3px;
    font-size: 35px;
    font-weight: 700;
    line-height: 44px;
    letter-spacing: 2px;
    color: #2d7d6c;
}

.rule {
    height: 5px;
    background-color: #0f6b58;
    box-shadow: 0 2px 1px #c5f0e8;
}

.text-box {
    padding: 18px 0 0 70px;
}

.ask {
    margin: 0 0 33px;
    font-family: "Noto Sans CJK TC", "Noto Sans CJK SC", sans-serif;
    font-size: 35px;
    font-weight: 700;
    line-height: 50px;
    letter-spacing: 0.3px;
    color: #e3201b;
    text-shadow: 1px 1px 2px rgba(170, 40, 30, 0.45);
    white-space: nowrap;
}

.bullet-block {
    display: flex;
}

.bullet {
    width: 55px;
    margin-left: -10px;
    font-size: 36px;
    font-weight: 700;
    line-height: 51px;
    color: #222;
}

.lines {
    font-size: 31px;
    letter-spacing: 0.25px;
    line-height: 51px;
    color: #3a3a3a;
    white-space: nowrap;
}

.lines > div {
    height: 51px;
}

.gc {
    font-size: 26px;
}

.hot {
    color: #d9574f;
}

.marked {
    background-color: #b5b5b5;
    padding: 7px 0;
}

.chart-row {
    display: flex;
    margin: 12px 0 0 123px;
}

.jdk {
    width: 230px;
    padding-top: 85px;
    font-family: "Open Sans", sans-serif;
    font-size: 39px;
    font-weight: 700;
    line-height: 60px;
    color: #111;
}

.chart {
    width: 696px;
    height: 196px;
    display: flex;
    font-size: 17px;
    font-weight: 700;
}

.seg {
    display: flex;
    align-items: center;
    justify-content: center;
    padding-top: 4px;
    border-top: 3px solid #4a3a30;
    border-bottom: 3px solid #4a3a30;
    border-right: 2px solid #4a3a30;
    color: #5a3018;
}

.seg-eden {
    width: 185px;
    background-color: #ff8a00;
    border-left: 2px solid #4a3a30;
}

.seg-s0 {
    width: 76px;
    background-color: #ff7268;
}

.seg-s1 {
    width: 78px;
    background-color: #ff7268;
}

.seg-ten {
    width: 196px;
    background-color: #2a93f5;
    color: #fff;
    font-size: 20px;
}

.seg-meta {
    width: 161px;
    background-color: #e2e2e4;
    color: #111;
    font-size: 20px;
    border: 3px dashed #4a4a50;
    border-left: 0;
}

.braces {
    background-color: #fafafa;
}

.note {
    font-family: "Noto Sans CJK SC", sans-serif;
    font-size: 18px;
    font-weight: 700;
    fill: #e2604f;
    stroke: none;
}

/* overlays */
.watermark {
    position: absolute;
    left: 1061px;
    top: 730px;
    font-size: 30px;
    font-family: "Noto Sans CJK SC", sans-serif;
    color: #e6e6e6;
    white-space: nowrap;
}

.cursor-dot {
    position: absolute;
    left: 260px;
    top: 220px;
    width: 70px;
    height: 70px;
    border-radius: 50%;
    background-color: #f4ee00;
    mix-blend-mode: multiply;
}

.text-cursor {
    position: absolute;
    left: 293px;
    top: 241px;
}

.frame {
    position: absolute;
    left: 55px;
    top: 82px;
    width: 1238px;
    height: 390px;
    border: 1px dashed #a0a0a0;
}

.handle {
    position: absolute;
    width: 16px;
    height: 16px;
    background-color: #fff;
    border: 2px solid #8e8e8e;
    border-radius: 50%;
}

.h-tl,
.h-ml,
.h-bl {
    left: -8px;
}

.h-tm,
.h-bm {
    left: 611px;
}

.h-tr,
.h-mr,
.h-br {
    right: -8px;
}

.h-tl,
.h-tm,
.h-tr {
    top: -8px;
}

.h-ml,
.h-mr {
    top: 187px;
}

.h-bl,
.h-bm,
.h-br {
    bottom: -8px;
}

.rotate {
    position: absolute;
    left: 605px;
    top: -67px;
    height: 60px;
}

.rotate::after {
    content: "";
    position: absolute;
    left: 15px;
    top: 32px;
    height: 28px;
    border-left: 1px solid #999;
}

/* status bar */
.status {
    height: 35px;
    flex: none;
    display: flex;
    align-items: center;
    padding-left: 10px;
    background-color: #ececec;
    font-size: 17.5px;
    color: #555;
}

.st-count {
    width: 239px;
    letter-spacing: 0.4px;
    white-space: nowrap;
}

.st-lang {
    margin-left: 36px;
    font-size: 17px;
}

.st-right {
    margin-left: auto;
    height: 100%;
    display: flex;
    align-items: center;
    font-size: 17px;
}

.st-note {
    margin: 0 32px 0 6px;
}

.st-comment {
    margin: 0 28px 0 6px;
}

.view-btn {
    width: 54px;
    height: 100%;
    display: flex;
    align-items: center;
    justify-content: center;
}

.view-on {
    background-color: #c9c9c9;
}

.ime {
    width: 221px;
    height: 100%;
    margin-left: 17px;
    display: flex;
    align-items: center;
    justify-content: space-between;
    padding: 0 8px;
    background-color: #fdfdfd;
}

.ime-en {
    font-size: 22px;
    font-weight: 700;
    color: #2b78c2;
}

.ime-dot {
    font-size: 18px;
    color: #333;
}

.zoom-plus {
    margin-left: 3px;
    font-size: 20px;
    font-weight: 700;
}

.zoom-val {
    margin: 0 15px 0 18px;
}

.st-right > svg:last-child {
    margin-right: 13px;
}

.dock-dot {
    position: absolute;
    left: 11px;
    top: 1074px;
    width: 46px;
    height: 46px;
    border-radius: 50%;
    background-color: #a9c4de;
}
```
